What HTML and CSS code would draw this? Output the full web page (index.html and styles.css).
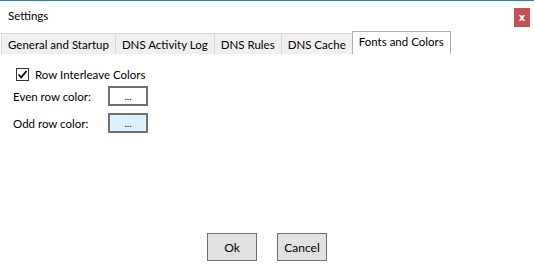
FILE: index.html
```html
<!DOCTYPE html>
<html>

<head>
    <title>Settings</title>
    <link rel="stylesheet" href="styles.css">
</head>

<body>
    <div class="window">
        <div class="title-bar">
            <span class="title">Settings</span>
            <button class="close-btn">x</button>
        </div>
        <div class="tabs">
            <div class="tab">General and Startup</div>
            <div class="tab">DNS Activity Log</div>
            <div class="tab">DNS Rules</div>
            <div class="tab">DNS Cache</div>
            <div class="tab active">Fonts and Colors</div>
        </div>
        <div class="panel">
            <label class="check-row">
                <span class="checkbox">
                    <svg width="11" height="11" viewBox="0 0 11 11">
                        <path d="M1.5 5.5 L4.2 8.3 L9.5 2" fill="none" stroke="#000" stroke-width="1.8" />
                    </svg>
                </span>
                Row Interleave Colors
            </label>
            <div class="color-row">
                <span class="color-label">Even row color:</span>
                <button class="color-btn even">...</button>
            </div>
            <div class="color-row">
                <span class="color-label">Odd row color:</span>
                <button class="color-btn odd">...</button>
            </div>
        </div>
        <div class="footer">
            <button class="dlg-btn">Ok</button>
            <button class="dlg-btn">Cancel</button>
        </div>
    </div>
</body>

</html>
```

FILE: styles.css
```css
body {
    margin: 0;
    padding: 0;
    background-color: #ffffff;
    font-family: Lato, "Segoe UI", sans-serif;
    font-size: 11.5px;
    color: #000000;
}

.window {
    height: 271px;
    border-top: 1px solid #1883d7;
    display: flex;
    flex-direction: column;
}

.title-bar {
    display: flex;
    justify-content: space-between;
    align-items: flex-start;
    height: 30px;
}

.title {
    margin-left: 8px;
    margin-top: 8px;
}

.close-btn {
    width: 16px;
    height: 19px;
    margin-top: 7px;
    margin-right: 4px;
    padding: 0;
    border: none;
    background-color: #c75050;
    color: white;
    font-family: "DejaVu Sans", sans-serif;
    font-weight: bold;
    font-size: 10px;
    line-height: 17px;
}

.tabs {
    display: flex;
    align-items: flex-end;
    margin-left: 1px;
    height: 23px;
}

.tab {
    height: 20px;
    line-height: 21px;
    padding: 0 6px;
    background-color: #f0f0f0;
    border: 1px solid #d9d9d9;
    border-bottom: none;
    margin-right: -1px;
    white-space: nowrap;
}

.tab.active {
    height: 22px;
    line-height: 20px;
    padding: 0 6px;
    background-color: #ffffff;
    border-color: #adadad;
    position: relative;
    z-index: 1;
}

.panel {
    flex: 1;
    padding: 14px 0 0 13px;
}

.check-row {
    display: flex;
    align-items: center;
    gap: 6px;
    margin-left: 3px;
    height: 13px;
}

.checkbox {
    width: 11px;
    height: 11px;
    border: 1px solid #333333;
    display: flex;
    align-items: center;
    justify-content: center;
}

.color-row {
    display: flex;
    align-items: center;
    margin-top: 5px;
    height: 20px;
}

.color-row + .color-row {
    margin-top: 7px;
}

.color-label {
    width: 95px;
}

.color-btn {
    width: 40px;
    height: 20px;
    padding: 0;
    border: 2px solid #707070;
    background-color: #ffffff;
    font-family: Lato, sans-serif;
    font-size: 10px;
    line-height: 14px;
}

.color-btn.odd {
    background-color: #def1ff;
}

.footer {
    display: flex;
    justify-content: center;
    gap: 20px;
    padding-bottom: 11px;
}

.dlg-btn {
    width: 50px;
    height: 28px;
    padding: 0;
    border: 1px solid #707070;
    background-color: #e1e1e1;
    font-family: Lato, sans-serif;
    font-size: 12px;
}
```
